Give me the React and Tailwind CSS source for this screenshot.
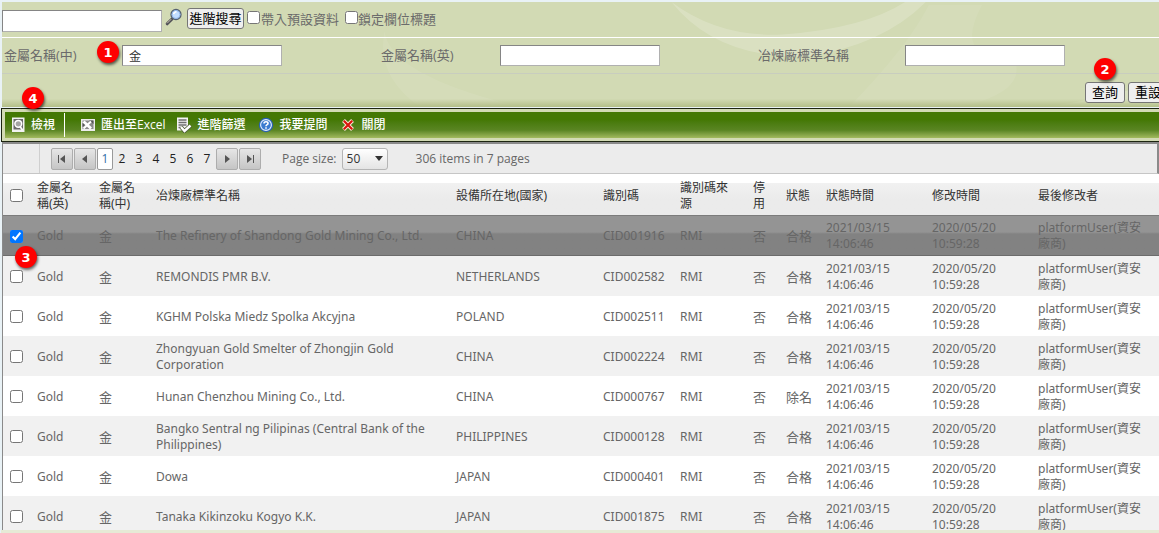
import { useState } from "react";

const ROWS = [
  { name: "The Refinery of Shandong Gold Mining Co., Ltd.", country: "CHINA", cid: "CID001916", status: "合格" },
  { name: "REMONDIS PMR B.V.", country: "NETHERLANDS", cid: "CID002582", status: "合格" },
  { name: "KGHM Polska Miedz Spolka Akcyjna", country: "POLAND", cid: "CID002511", status: "合格" },
  { name: "Zhongyuan Gold Smelter of Zhongjin Gold Corporation", country: "CHINA", cid: "CID002224", status: "合格" },
  { name: "Hunan Chenzhou Mining Co., Ltd.", country: "CHINA", cid: "CID000767", status: "除名" },
  { name: "Bangko Sentral ng Pilipinas (Central Bank of the Philippines)", country: "PHILIPPINES", cid: "CID000128", status: "合格" },
  { name: "Dowa", country: "JAPAN", cid: "CID000401", status: "合格" },
  { name: "Tanaka Kikinzoku Kogyo K.K.", country: "JAPAN", cid: "CID001875", status: "合格" },
];

const HEADS = [
  "金屬名稱(英)",
  "金屬名稱(中)",
  "冶煉廠標準名稱",
  "設備所在地(國家)",
  "識別碼",
  "識別碼來源",
  "停用",
  "狀態",
  "狀態時間",
  "修改時間",
  "最後修改者",
];

function Badge({ n, className }) {
  return (
    <span
      className={`absolute z-10 flex h-[22px] w-[22px] items-center justify-center rounded-full bg-[#fe0000] font-['DejaVu_Sans',sans-serif] text-[13px] font-bold leading-none text-white shadow-[1px_2px_3px_rgba(0,0,0,0.6)] ${className}`}
    >
      {n}
    </span>
  );
}

function Swirls() {
  return (
    <svg
      className="pointer-events-none absolute inset-0 h-full w-full"
      viewBox="0 0 1157 71"
      preserveAspectRatio="xMidYMin slice"
      fill="#fff"
      aria-hidden="true"
    >
      <path d="M640 0 Q672 24 715 22 Q770 18 798 0 H812 Q782 30 730 37 Q670 38 640 0Z" opacity=".18" />
      <path d="M814 2 Q800 30 760 71 H835 Q885 60 870 35 Q830 40 850 2Z" opacity=".07" />
      <path d="M1042 0 H1057 Q1045 45 985 71 H892 Q1010 55 1042 0Z" opacity=".18" />
      <path d="M446 20 Q450 50 538 71 H470 Q440 50 446 20Z" opacity=".08" />
    </svg>
  );
}

function SearchIcon() {
  return (
    <svg viewBox="0 0 18 18" className="h-[18px] w-[18px]" aria-hidden="true">
      <path d="M2.2 15.8 L7 11" stroke="#4f4f55" strokeWidth="3" strokeLinecap="round" />
      <path d="M2.4 15 L6 11.4" stroke="#c9c2b0" strokeWidth="1" strokeLinecap="round" />
      <circle cx="11" cy="6.5" r="5" fill="#c3deff" stroke="#55606f" strokeWidth="1.3" />
      <circle cx="11" cy="6.5" r="4" fill="none" stroke="#8fb6ea" strokeWidth="1" />
      <path d="M8.6 6.2 Q9 4 11.5 3.8" stroke="#fff" strokeWidth="1.6" fill="none" />
    </svg>
  );
}

function ViewIcon() {
  return (
    <svg viewBox="0 0 14 16" className="h-4 w-[14px]" aria-hidden="true">
      <path d="M0 .5H12.5V15H0Z" fill="#f2f2f2" />
      <path d="M1.5 2H11V12.5H1.5Z" fill="#6a6a6a" />
      <circle cx="6.3" cy="6.8" r="3.4" fill="#a5a5a5" stroke="#fff" strokeWidth="1.5" />
      <path d="M8 9.5L10.5 13" stroke="#fff" strokeWidth="1.8" />
    </svg>
  );
}

function ExcelIcon() {
  return (
    <svg viewBox="0 0 16 14" className="h-[14px] w-4" aria-hidden="true">
      <path d="M1 1H15V13H1Z" fill="#ececec" />
      <path d="M2.5 2.5H13.5V11H2.5Z" fill="#8a8a8a" />
      <path d="M9 2.5H13.5V6Z" fill="#555" />
      <path d="M3.5 3.5L11 10.5" stroke="#fff" strokeWidth="2.8" />
      <path d="M11 3.5L3.5 10.5" stroke="#fff" strokeWidth="2" />
      <path d="M2.5 5V9L4.8 7Z" fill="#555" />
    </svg>
  );
}

function FilterIcon() {
  return (
    <svg viewBox="0 0 16 16" className="h-4 w-4" aria-hidden="true">
      <path d="M1 .5H12V13.5H1Z" fill="#f4f4f4" />
      <path d="M2.5 3H10.5M2.5 5.5H10.5M2.5 8H10.5M2.5 10.5H6" stroke="#6f6f6f" strokeWidth="1.3" />
      <path d="M5 10L8.5 14L14.5 8.5" stroke="#4b5a35" strokeWidth="4" fill="none" />
      <path d="M5 10L8.5 14L14.5 8.5" stroke="#fff" strokeWidth="2.4" fill="none" />
    </svg>
  );
}

function HelpIcon() {
  return (
    <svg viewBox="0 0 16 16" className="h-4 w-4" aria-hidden="true">
      <circle cx="8" cy="8" r="7.2" fill="#2a62b5" />
      <circle cx="8" cy="8" r="5.4" fill="#3a7bd0" stroke="#e6f0fc" strokeWidth="1.1" />
      <path d="M6 6.6Q6 4.8 8 4.8Q10 4.8 10 6.4Q10 7.3 8.8 7.9Q8 8.4 8 9.3M8 10.3V11.7" stroke="#fff" strokeWidth="1.6" fill="none" />
    </svg>
  );
}

function CloseIcon() {
  return (
    <svg viewBox="0 0 12 12" className="h-3 w-3" aria-hidden="true">
      <path d="M1.5 1.5L10.5 10.5M10.5 1.5L1.5 10.5" stroke="#ffe9dc" strokeWidth="4" />
      <path d="M1.8 1.8L10.2 10.2M10.2 1.8L1.8 10.2" stroke="#d8150c" strokeWidth="2.2" />
    </svg>
  );
}

function ToolButton({ icon, children, className }) {
  return (
    <button className={`flex items-center whitespace-nowrap text-xs font-medium text-white ${className}`}>
      {icon}
      {children}
    </button>
  );
}

function PagerButton({ label, path }) {
  return (
    <button
      aria-label={label}
      className="flex h-[22px] w-[22px] items-center justify-center rounded-[2px] border border-[#adadad] bg-linear-to-b from-[#e6e6e6] to-[#c5c5c5]"
    >
      <svg viewBox="0 0 10 10" className="h-[10px] w-[10px]" aria-hidden="true">
        <path d={path} fill="#555" />
      </svg>
    </button>
  );
}

function Field({ id, label, labelClass, defaultValue }) {
  return (
    <div className="flex items-center">
      <label htmlFor={id} className={`shrink-0 ${labelClass}`}>
        {label}
      </label>
      <input
        id={id}
        type="text"
        defaultValue={defaultValue}
        className="h-[21px] w-40 border border-[#b0b0b0] border-t-[#858585] border-l-[#858585] bg-white px-[6px] text-xs text-[#333]"
      />
    </div>
  );
}

const formButton =
  "h-[21px] shrink-0 rounded-[3px] border border-[#767676] bg-[#efefef] text-[13px] leading-none text-black";

function SearchPanel() {
  return (
    <section className="relative bg-[#d2dab4] text-[13px] text-[#6b6b6b]">
      <Swirls />
      <div className="relative flex h-9 items-center border-b border-white">
        <input
          aria-label="搜尋"
          type="text"
          className="mt-[2px] h-[22px] w-40 border border-[#b0b0b0] border-t-[#858585] border-l-[#858585] bg-white px-1"
        />
        <button aria-label="搜尋" className="ml-[3px] mb-[6px]">
          <SearchIcon />
        </button>
        <button className={`ml-1 mb-[2px] w-[57px] ${formButton}`}>進階搜尋</button>
        <label className="ml-[3px] flex items-center gap-px">
          <input type="checkbox" className="mb-1 h-[13px] w-[13px]" />
          帶入預設資料
        </label>
        <label className="ml-[6px] flex items-center">
          <input type="checkbox" className="mb-1 h-[13px] w-[13px]" />
          鎖定欄位標題
        </label>
      </div>
      <div className="relative grid h-9 grid-cols-[377fr_377fr_401fr] items-center border-b border-[#c8cdbf] pl-[2px]">
        <Field id="metal-zh" label="金屬名稱(中)" labelClass="w-[118px]" defaultValue="金" />
        <Field id="metal-en" label="金屬名稱(英)" labelClass="w-[119px]" />
        <Field id="smelter" label="冶煉廠標準名稱" labelClass="w-[147px]" />
        <Badge n={1} className="left-[95px] top-[3px]" />
      </div>
      <div className="relative h-[33px]">
        <div className="flex h-full items-start justify-end gap-[3px] overflow-hidden bg-linear-to-b from-transparent from-75% to-[#b3bf88] pt-2">
          <button className={`w-10 ${formButton}`}>查詢</button>
          <button className={`-mr-[9px] w-10 ${formButton}`}>重設</button>
        </div>
        <Badge n={2} className="right-[43px] -top-4" />
        <Badge n={4} className="left-5 top-[13px]" />
      </div>
    </section>
  );
}

function Toolbar() {
  return (
    <div className="mt-[1px] border border-[#1c2410] border-r-0 bg-[#d2dab4] py-[3px] pl-[3px]">
      <div className="flex h-[26px] items-center bg-linear-to-b from-[#447804] from-30% via-[#5a8522] via-70% to-[#a3ba5e]">
        <ToolButton icon={<ViewIcon />} className="ml-[7px] gap-[5px]">檢視</ToolButton>
        <span className="ml-[9px] h-6 w-px bg-white" />
        <ToolButton icon={<ExcelIcon />} className="ml-[15px] gap-[5px]">匯出至Excel</ToolButton>
        <ToolButton icon={<FilterIcon />} className="ml-[11px] gap-[5px]">進階篩選</ToolButton>
        <ToolButton icon={<HelpIcon />} className="ml-3 gap-[6px]">我要提問</ToolButton>
        <ToolButton icon={<CloseIcon />} className="ml-[14px] gap-2">關閉</ToolButton>
      </div>
    </div>
  );
}

function Pager() {
  const [page, setPage] = useState(1);

  return (
    <div className="flex h-8 shrink-0 items-center border-t-2 border-r-2 border-b border-t-[#8a8a8a] border-r-[#8a8a8a] border-b-[#c6c6c6] bg-[#ececec] text-xs text-[#666]">
      <span className="h-full w-[37px] border-r border-[#cfcfcf]" />
      <div className="ml-[11px] flex items-center gap-px">
        <PagerButton label="First page" path="M1 1H2V9H1ZM8 1V9L3 5Z" />
        <PagerButton label="Previous page" path="M7 1V9L2 5Z" />
        {[1, 2, 3, 4, 5, 6, 7].map((p) => (
          <button
            key={p}
            onClick={() => setPage(p)}
            className={`h-[22px] w-4 rounded-[2px] ${
              p === page ? "border border-[#999] bg-white text-[#2f6ea8]" : "text-[#222]"
            }`}
          >
            {p}
          </button>
        ))}
        <PagerButton label="Next page" path="M3 1V9L8 5Z" />
        <PagerButton label="Last page" path="M2 1V9L7 5ZM8 1H9V9H8Z" />
      </div>
      <label htmlFor="page-size" className="ml-[21px]">
        Page size:
      </label>
      <div className="relative ml-[5px]">
        <select
          id="page-size"
          className="block h-[22px] w-[46px] appearance-none rounded-[3px] border border-[#b5b5b5] bg-linear-to-b from-white to-[#e4e4e4] pl-1 text-xs text-[#333]"
        >
          <option>50</option>
          <option>100</option>
        </select>
        <svg viewBox="0 0 8 5" className="pointer-events-none absolute right-[5px] top-2 h-[5px] w-2" aria-hidden="true">
          <path d="M0 0H8L4 5Z" fill="#333" />
        </svg>
      </div>
      <span className="ml-7">306 items in 7 pages</span>
    </div>
  );
}

function Grid() {
  const [selected, setSelected] = useState([0]);

  const toggle = (i) =>
    setSelected((s) => (s.includes(i) ? s.filter((x) => x !== i) : [...s, i]));

  return (
    <div className="relative">
      <table className="w-full table-fixed border-separate border-spacing-0 text-left font-['Noto_Sans','Noto_Sans_CJK_TC',sans-serif] text-xs leading-4 text-[#666]">
        <colgroup>
          <col className="w-[27px]" />
          <col className="w-[62px]" />
          <col className="w-[57px]" />
          <col />
          <col className="w-[147px]" />
          <col className="w-[77px]" />
          <col className="w-[73px]" />
          <col className="w-[33px]" />
          <col className="w-10" />
          <col className="w-[106px]" />
          <col className="w-[106px]" />
          <col className="w-[128px]" />
        </colgroup>
        <thead>
          <tr className="h-[42px] bg-linear-to-b from-white from-22% via-[#f1f1f1] via-22% to-[#ebebeb] to-60% text-[#333] *:border-b *:border-[#7c7c7c] *:pt-[2px]">
            <th className="pl-[7px]">
              <input type="checkbox" aria-label="全選" className="block h-[13px] w-[13px]" />
            </th>
            {HEADS.map((h) => (
              <th key={h} className="pl-[7px] pr-[9px] pb-0 font-normal">
                {h}
              </th>
            ))}
          </tr>
        </thead>
        <tbody>
          {ROWS.map((row, i) => (
            <tr
              key={row.cid}
              className={`h-10 *:pl-[7px] *:pr-2 *:pt-px ${
                selected.includes(i)
                  ? "bg-linear-to-b from-[#949494] from-40% to-[#828282] to-45% *:border-b *:border-[#6c6c6c]"
                  : i % 2
                    ? "bg-[#f1f1f1]"
                    : "bg-white"
              }`}
            >
              <td>
                <input
                  type="checkbox"
                  aria-label={row.name}
                  checked={selected.includes(i)}
                  onChange={() => toggle(i)}
                  className="block h-[13px] w-[13px]"
                />
              </td>
              <td>Gold</td>
              <td className="text-[13px]">金</td>
              <td>{row.name}</td>
              <td>{row.country}</td>
              <td>{row.cid}</td>
              <td>RMI</td>
              <td className="text-[13px]">否</td>
              <td className="whitespace-nowrap text-[13px]">{row.status}</td>
              <td>2021/03/15 14:06:46</td>
              <td>2020/05/20 10:59:28</td>
              <td>platformUser(資安廠商)</td>
            </tr>
          ))}
        </tbody>
      </table>
      <Badge n={3} className="left-3 top-[72px]" />
    </div>
  );
}

export default function App() {
  return (
    <div className="flex h-screen flex-col overflow-hidden bg-[#e9f2f6] pt-[2px] font-['Open_Sans','Noto_Sans_CJK_TC',sans-serif]">
      <div className="ml-[2px] shrink-0">
        <SearchPanel />
      </div>
      <div className="ml-px shrink-0">
        <Toolbar />
      </div>
      <main className="ml-[2px] min-h-0 flex-1 overflow-hidden border-l border-[#8a8a8a] bg-white">
        <Pager />
        <Grid />
      </main>
      <footer className="ml-px h-[3px] shrink-0 bg-[#e6ead6]" />
    </div>
  );
}
